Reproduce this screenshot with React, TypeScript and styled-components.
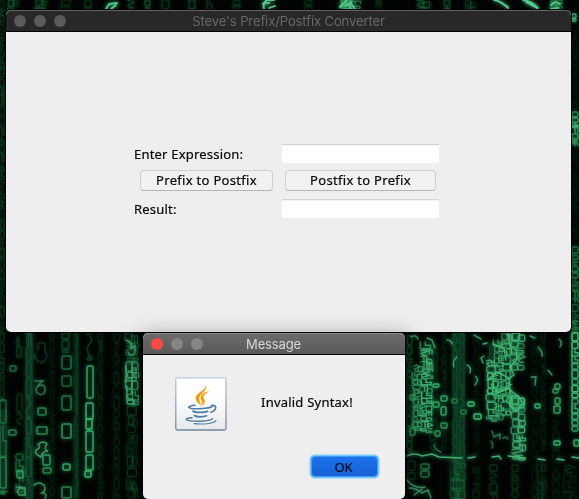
import React from "react";
import styled, { createGlobalStyle } from "styled-components";

const GlobalStyle = createGlobalStyle`
  html, body { margin: 0; padding: 0; overflow: hidden; background: #010402; }
  * { box-sizing: border-box; }
`;

const Desktop = styled.main`
  position: relative;
  width: 579px;
  height: 499px;
  overflow: hidden;
  background: #010402;
`;

const Wallpaper = styled.svg`
  position: absolute;
  inset: 0;
  display: block;
`;

const WindowFrame = styled.section<{ $x: number; $y: number; $w: number; $h: number; $active?: boolean }>`
  position: absolute;
  left: ${(p) => p.$x}px;
  top: ${(p) => p.$y}px;
  width: ${(p) => p.$w}px;
  height: ${(p) => p.$h}px;
  display: flex;
  flex-direction: column;
  overflow: hidden;
  border-radius: 5px;
  background: #eeeeee;
  box-shadow: 0 0 0 1px #000000${(p) => (p.$active ? ", 0 9px 24px 4px rgba(0, 0, 0, 0.42)" : "")};
`;

const TitleBar = styled.header<{ $active?: boolean }>`
  flex: none;
  display: grid;
  grid-template-columns: 60px 1fr 60px;
  align-items: center;
  height: 22px;
  padding-left: 8px;
  padding-right: 8px;
  border-bottom: 1px solid #000;
  border-radius: 5px 5px 0 0;
  background: ${(p) => (p.$active ? "linear-gradient(#6c6c6c, #5a5a5a)" : "#282828")};
  box-shadow: inset 0 1px 0 ${(p) => (p.$active ? "#8a8a8a" : "#636363")};
`;

const Lights = styled.div`
  display: flex;
  gap: 8px;
`;

const Light = styled.span<{ $color: string }>`
  width: 12px;
  height: 12px;
  border-radius: 50%;
  background: ${(p) => p.$color};
`;

const Title = styled.h1<{ $active?: boolean }>`
  margin: 0 ${(p) => (p.$active ? 1 : 0)}px 0 0;
  text-align: center;
  white-space: nowrap;
  font: 400 13px/20px Inter, sans-serif;
  letter-spacing: ${(p) => (p.$active ? "-0.15px" : "-0.1px")};
  color: ${(p) => (p.$active ? "#d8d8d8" : "#686868")};
`;

const Form = styled.div`
  display: grid;
  grid-template-columns: 145px 160px;
  grid-template-rows: 20px 33px 24px;
  align-items: center;
  margin: 112px 0 0 128px;
  font: 400 13px/18px "Noto Sans", sans-serif;
  letter-spacing: 0.2px;
  color: #080808;
  -webkit-text-stroke: 0.2px #080808;
`;

const Label = styled.label`
  white-space: nowrap;
`;

const TextField = styled.input`
  width: 157px;
  height: 19px;
  margin: -1px 0 0 3px;
  padding: 0 4px;
  border: 0;
  border-top: 1px solid #d3d3d3;
  border-radius: 0;
  outline: 0;
  background: #fff;
  box-shadow: inset 0 1px 0 #f3f3f3;
`;

const PushButton = styled.button<{ $w: number }>`
  width: ${(p) => p.$w}px;
  height: 21px;
  margin-left: 6px;
  padding: 0 0 1px;
  border: 1px solid #cfcfcf;
  border-bottom-color: #b4b4b4;
  border-radius: 4px;
  background: #f1f1f1;
  font: inherit;
  line-height: 17px;
  letter-spacing: 0.3px;
  color: #080808;
`;

const MessageRow = styled.div`
  display: flex;
  align-items: center;
  gap: 34px;
  height: 54px;
  margin: 22px 0 0 32px;
  font: 400 13px/18px "Noto Sans", sans-serif;
  letter-spacing: 0.22px;
  color: #080808;
  -webkit-text-stroke: 0.2px #080808;
`;

const MessageText = styled.p`
  margin: -4px 0 0;
  white-space: nowrap;
`;

const Actions = styled.footer`
  display: flex;
  justify-content: flex-end;
  padding: 26px 28px 0 0;
`;

const DefaultButton = styled.button`
  width: 65px;
  height: 19px;
  padding: 0 2px 0 0;
  border: 0;
  border-radius: 3px;
  background: linear-gradient(#1b72ed, #1660d4);
  box-shadow: 0 0 0 1px #3d9df3, 0 0 0 2.5px #79c8fa;
  font: 400 13px/18px "Noto Sans", sans-serif;
  color: #050a14;
  -webkit-text-stroke: 0.2px #050a14;
`;

const JavaIcon = () => (
  <svg width="52" height="54" viewBox="0 0 52 54" aria-label="Java">
    <defs>
      <linearGradient id="tile" x1="0" y1="0" x2="0" y2="1">
        <stop offset="0.35" stopColor="#ffffff" />
        <stop offset="1" stopColor="#e7e8ea" />
      </linearGradient>
      <linearGradient id="tileEdge" x1="0" y1="0" x2="0" y2="1">
        <stop offset="0" stopColor="#b5cadd" />
        <stop offset="1" stopColor="#6d879f" />
      </linearGradient>
    </defs>
    <rect x="0.8" y="0.8" width="50.2" height="52.2" rx="1.5" fill="url(#tile)" stroke="url(#tileEdge)" strokeWidth="1.3" />
    <path d="M30 6c3.600 7.400-9.800 9.600-9.300 15.400.2 3.400 3.400 5.100 6.100 7.600-1.900-4.800-4.100-7-1.600-10 2.800-3.500 8.200-6.800 4.800-13Z" fill="#f39a0b" />
    <path d="M34.800 14c-5.600.9-9.600 4.200-9 7.800.4 2.300 2.600 3.800 1 7 4-2.800 3.500-5.200 1.900-7.500-1.400-2.500 2.200-5.200 6.100-7.300Z" fill="#f39a0b" />
    <g fill="none" stroke="#4e7ea4" strokeLinecap="round">
      <path d="M20 28.300c-6.800.8-8.100 2.300-3.500 3.100 5.500.8 16 .3 20.500-1.600" strokeWidth="1.500" />
      <path d="M36.500 28.600c5.500-1.400 5.700 4.500-.5 6.700" strokeWidth="1.700" />
      <path d="M18 34c2.200 2 11.300 1.600 14.700.4" strokeWidth="1.700" />
      <path d="M19.600 38.500c2 1.800 8.700 1.600 11.900.3" strokeWidth="1.700" />
      <path d="M17.100 40.700c-7.600.4-8 2.400-1.200 3.200 7.100.7 19.400.4 21.600-2.300" strokeWidth="1.400" />
      <path d="M19 46.600c8.300.9 19.500.3 22-3" strokeWidth="1.100" />
    </g>
  </svg>
);

type Mark = { x: number; y: number; w: number; h: number; kind: number; o: number; c: string };

const seeded = (seed: number) => () => {
  seed = (seed * 1664525 + 1013904223) % 4294967296;
  return seed / 4294967296;
};

/* Stream: x, top, bottom, width, opacity, glyph height, bright */
const streams: number[][] = [
  [0, 0, 400, 5, 0.3, 9, 0], [0, 400, 494, 7, 0.9, 27, 0],
  [8, 0, 10, 10, 0.45, 8, 0], [35, 0, 10, 12, 0.45, 7, 0], [60, 0, 10, 10, 0.3, 6, 0],
  [85, 0, 10, 7, 0.4, 8, 0], [128, 0, 10, 7, 0.5, 8, 0], [145, 0, 10, 6, 0.5, 6, 0],
  [162, 0, 10, 8, 0.3, 8, 0], [189, 0, 10, 7, 0.35, 8, 0], [207, 0, 10, 6, 0.35, 8, 0],
  [233, 0, 10, 8, 0.3, 8, 0], [305, 0, 10, 8, 0.3, 8, 0], [340, 0, 10, 20, 0.8, 5, 1],
  [376, 0, 10, 6, 0.25, 6, 0], [418, 0, 10, 12, 0.6, 9, 0], [444, 0, 10, 7, 0.5, 7, 0],
  [465, 0, 10, 10, 0.25, 7, 0], [550, 0, 10, 12, 0.8, 5, 0],
  [572, 14, 20, 5, 0.8, 5, 1], [573, 30, 110, 5, 0.13, 8, 0], [572, 112, 146, 7, 0.8, 5, 1],
  [573, 150, 240, 5, 0.13, 9, 0], [572, 247, 332, 7, 0.7, 6, 0],
  [17, 337, 357, 5, 0.3, 18, 0], [17, 394, 424, 6, 0.35, 15, 0],
  [16, 454, 492, 8, 0.7, 10, 0], [26, 333, 499, 6, 0.35, 18, 0],
  [50, 333, 499, 5, 0.16, 9, 0], [62, 333, 352, 8, 0.4, 8, 0],
  [74, 333, 499, 4, 0.2, 19, 0], [87, 333, 360, 6, 0.4, 25, 0],
  [98, 333, 499, 5, 0.2, 9, 0], [114, 333, 499, 6, 0.2, 10, 0],
  [126, 333, 361, 12, 0.5, 8, 0], [126, 362, 404, 12, 0.9, 9, 1],
  [127, 406, 499, 10, 0.3, 9, 0],
  [407, 336, 456, 6, 0.4, 8, 0], [413, 365, 430, 9, 0.75, 6, 1],
  [421, 342, 430, 11, 0.95, 6, 1], [430, 345, 450, 8, 0.2, 10, 0],
  [442, 333, 450, 5, 0.18, 8, 0], [453, 333, 499, 5, 0.3, 14, 0], [460, 333, 499, 5, 0.28, 14, 0],
  [474, 333, 455, 6, 0.12, 8, 0], [487, 360, 418, 10, 0.9, 7, 1],
  [493, 340, 418, 10, 0.8, 7, 1], [501, 333, 415, 10, 0.85, 8, 1],
  [511, 333, 370, 13, 0.85, 8, 1], [512, 396, 459, 13, 0.95, 8, 1],
  [532, 333, 499, 6, 0.12, 10, 0], [541, 333, 450, 5, 0.18, 7, 0],
  [553, 420, 499, 7, 0.15, 9, 0], [572, 333, 431, 7, 1, 7, 1],
  [408, 461, 481, 8, 0.35, 8, 0], [450, 462, 499, 15, 0.32, 9, 0],
  [473, 466, 499, 7, 0.18, 8, 0], [490, 465, 499, 8, 0.25, 9, 0],
  [512, 465, 499, 7, 0.23, 9, 0], [537, 465, 499, 9, 0.22, 9, 0], [564, 465, 499, 12, 0.22, 9, 0],
];

const marks: Mark[] = streams.flatMap(([x, top, bottom, w, o, gh, bright], i) => {
  const rnd = seeded(i * 7919 + 31);
  const out: Mark[] = [];
  const pick = () => {
    const k = rnd();
    return k < 0.65 ? 0 : k < 0.75 ? 2 : k < 0.88 ? 3 : 4;
  };
  let y = top;
  while (y < bottom) {
    const h = Math.min(gh * (0.7 + rnd() * 0.6), bottom - y + 1);
    const double = w > 8 && rnd() > 0.3;
    const c = bright ? "#43be78" : "#279451";
    const gw = double ? w * 0.55 : w - 1;
    const drift = w > 8 ? rnd() * 2.5 - 0.8 : 0;
    out.push({ x: x + drift, y, w: gw, h: Math.max(2, h - 1), kind: pick(), o: o * (0.6 + rnd() * 0.4), c });
    if (double) {
      out.push({ x: x + w * 0.5 + drift / 2, y: y + rnd() * 3, w: w * 0.5, h: Math.max(2, h - 2), kind: pick(), o: o * (0.55 + rnd() * 0.4), c });
    }
    y += h + rnd() * (bright ? 0.3 : 1.5);
  }
  return out;
});

/* Box glyphs: x, y, width, height, opacity */
const boxes: number[][] = [
  [10, 366, 6, 5, 0.5], [9, 430, 7, 5, 0.6], [17, 471, 6, 7, 0.75],
  [38, 408, 8, 7, 0.65], [37, 427, 10, 7, 0.7], [43, 455, 7, 10, 0.75], [43, 468, 8, 5, 0.65],
  [62, 356, 9, 13, 0.5], [62, 376, 9, 10, 0.45], [62, 396, 9, 14, 0.55], [62, 424, 9, 14, 0.75],
  [63, 464, 7, 6, 0.9], [62, 487, 9, 11, 0.65],
  [87, 366, 6, 32, 0.85], [86, 403, 7, 16, 0.95], [86, 419, 6, 10, 1], [86, 431, 7, 21, 0.9], [86, 455, 7, 15, 0.9], [85, 471, 6, 6, 1],
  [410, 395, 5, 5, 0.7], [433, 384, 6, 3, 0.9], [441, 396, 6, 5, 0.8], [441, 407, 5, 8, 0.8],
  [441, 423, 6, 5, 0.7], [433, 402, 6, 5, 0.8], [435, 431, 5, 5, 0.7], [410, 428, 5, 7, 0.7],
  [468, 402, 6, 4, 1], [474, 414, 7, 5, 1], [452, 399, 5, 4, 0.5], [461, 410, 5, 4, 0.5],
  [535, 404, 5, 4, 0.9], [555, 384, 5, 5, 0.8], [553, 389, 5, 4, 0.7], [555, 398, 5, 6, 0.8],
  [554, 406, 6, 7, 0.8], [554, 441, 6, 4, 0.9], [574, 440, 5, 6, 0.9],
  [421, 464, 8, 5, 0.5], [421, 471, 8, 6, 0.5], [496, 389, 14, 7, 0.9], [512, 398, 12, 10, 0.9],
];

const strokes: Array<[string, number]> = [
  ["M38 350v-6q4-3 7 0v8q4 3 0 8-4 6-9-1-4-2 0-5", 0.2],
  ["M35 381h8q-5 3-7 8c0 8 10 7 9 0 0-5-5-5-8-2", 0.55],
  ["M38 444q6-4 9 0-4 5 1 7-6 0-7 6-7-3-5-7 6-2 2-6", 0.75],
  ["M34 485q5-4 10 0 3 5-2 8 6 0 3 6M17 487l8 1v7h-6q-4-5 3-8", 0.7],
  ["M126 340l5 3v5l4-2v7q-5 5-7-1M126 366v15h10v-13h-4v26M127 386v14h7v4", 0.8],
  ["M411 337q5-3 7 2M427 338l5 2 3 8M447 340q4 0 5 4M454 367q-2-6 3-10M467 365q5 2 3 8M475 376q5 3 0 9M484 356l-3 2 2 5", 0.75],
  ["M474 335l7 4M483 344l4-1M509 333v12l7 5 1 9-7 8 4 8-8 5M493 344l11 4 2 12", 0.85],
  ["M538 347q5 5 4 9M548 370l4 5M559 339q4 3 1 8M531 377h5l-1 8M530 336l5 2", 0.7],
  ["M487 380l10-8 12 6v10l-11 5-7-9M510 390l9 7 4 7-7 7-7-7 3-9", 0.9],
  ["M492 431l2 6 6-3v5M491 441q3 3 1 7M503 438q4-2 5 1M434 445q2 6 7 7", 0.5],
  ["M407 456q7-4 15 0l10-2 7 3 23 1M468 458l7-1M492 457l7-1 2 3M508 456l17 2M538 459l7 1M557 459l7 1M572 457l7 1", 0.9],
  ["M407 480q7 9 18 7M409 488q7 0 13 5l6-3 3 8M414 495l8-6", 0.7],
];

const glints = [
  "M106 9l3-5 8-1M111 9l5-4", "M264 9q-2-7 5-6M269 8l6-2M263 4l4-4h7",
  "M340 7l7-7M345 6l4-2 2 5M350 2l5 7", "M494 0q7 1 14 8M500 2l8 5", "M523 0q8 1 15 8M526 2l11 6",
  "M551 5q4-5 9-1M551 9l7-1",
];

const drawMark = (m: Mark, i: number) => {
  const { x, y, w, h } = m;
  if (m.kind < 2) return <rect key={i} x={x} y={y} width={w} height={h} rx={1.5} stroke={m.c} opacity={m.o} />;
  const d = m.kind === 2
    ? `M${x} ${y}h${w}v${h}M${x + w / 2} ${y}v${h}`
    : m.kind === 3
      ? `M${x} ${y + 1}l${w / 2} -1l${w / 2} ${h / 3}l${-w} ${h / 3}l${w / 3} ${h / 3}h${w / 2}`
      : `M${x} ${y}v${h}h${w}v${-h / 2}h${-w / 2}v${-h / 2}`;
  return <path key={i} d={d} stroke={m.c} opacity={m.o} />;
};

const CodeRain = () => (
  <Wallpaper width="579" height="499" viewBox="0 0 579 499" aria-hidden="true">
    <defs>
      <filter id="glow" x="0" y="0" width="100%" height="100%">
        <feGaussianBlur in="SourceGraphic" stdDeviation="2" result="halo" />
        <feGaussianBlur in="SourceGraphic" stdDeviation="0.6" result="line" />
        <feMerge><feMergeNode in="halo" /><feMergeNode in="line" /></feMerge>
      </filter>
    </defs>
    <g fill="none" strokeWidth="1.4" strokeLinecap="round" filter="url(#glow)">
      <g fill="#0a3520" stroke="none">
        <rect x="26" y="333" width="7" height="166" />
        <rect x="75" y="333" width="4" height="166" opacity="0.6" />
        <rect x="453" y="333" width="12" height="166" opacity="0.8" />
        <rect x="0" y="410" width="7" height="82" />
        <rect x="415" y="375" width="16" height="55" />
        <rect x="489" y="345" width="20" height="70" />
        <rect x="573" y="333" width="6" height="98" />
        <rect x="127" y="365" width="11" height="38" />
      </g>
      {marks.map(drawMark)}
      {boxes.map(([x, y, w, h, o], i) => (
        <rect key={i} x={x} y={y} width={w} height={h} rx="1.3" stroke="#38b66b" strokeWidth="1.5" opacity={o} />
      ))}
      {strokes.map(([d, o]) => <path key={d} d={d} stroke="#48bd7b" strokeWidth="1.4" opacity={o} />)}
      {glints.map((d) => <path key={d} d={d} stroke="#55c88b" strokeWidth="1.8" />)}
    </g>
  </Wallpaper>
);

const WindowControls = ({ close, rest }: { close: string; rest: string }) => (
  <Lights>
    <Light $color={close} />
    <Light $color={rest} />
    <Light $color={rest} />
  </Lights>
);

export default function App() {
  return (
    <>
      <GlobalStyle />
      <Desktop>
        <CodeRain />
        <WindowFrame $x={6} $y={10} $w={565} $h={322}>
          <TitleBar>
            <WindowControls close="#5b5b5b" rest="#5b5b5b" />
            <Title>Steve's Prefix/Postfix Converter</Title>
          </TitleBar>
          <Form>
            <Label htmlFor="expression">Enter Expression:</Label>
            <TextField id="expression" />
            <PushButton $w={133}>Prefix to Postfix</PushButton>
            <PushButton $w={151}>Postfix to Prefix</PushButton>
            <Label htmlFor="result">Result:</Label>
            <TextField id="result" readOnly />
          </Form>
        </WindowFrame>
        <WindowFrame $x={143} $y={333} $w={262} $h={166} $active>
          <TitleBar $active>
            <WindowControls close="#ff4b46" rest="#858585" />
            <Title $active>Message</Title>
          </TitleBar>
          <MessageRow>
            <JavaIcon />
            <MessageText>Invalid Syntax!</MessageText>
          </MessageRow>
          <Actions>
            <DefaultButton>OK</DefaultButton>
          </Actions>
        </WindowFrame>
      </Desktop>
    </>
  );
}
